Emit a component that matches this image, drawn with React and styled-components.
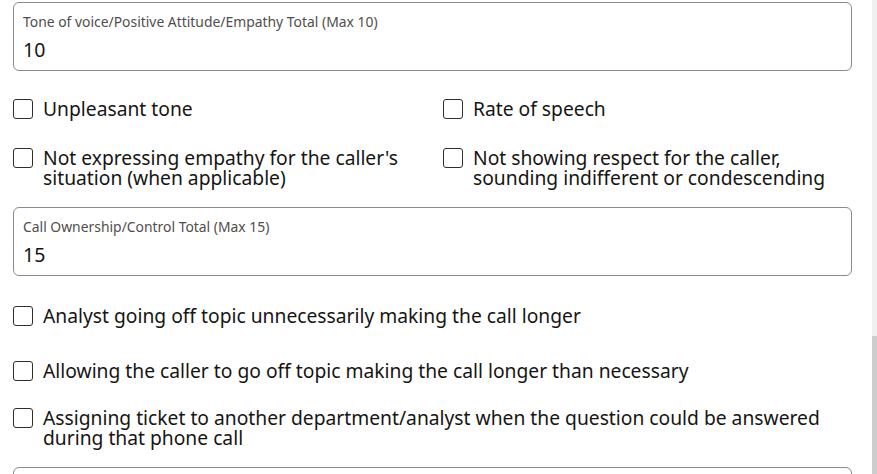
import React from "react";
import styled, { createGlobalStyle } from "styled-components";

const Global = createGlobalStyle`
  html, body {
    margin: 0;
    padding: 0;
    background: #ffffff;
    height: 474px;
    overflow: hidden;
  }
  body {
    font-family: "Noto Sans", "Open Sans", Arial, sans-serif;
    color: #161513;
  }
`;

const Page = styled.div`
  display: flex;
  width: 877px;
  height: 474px;
  overflow: hidden;
`;

const Content = styled.div`
  flex: 1;
  display: flex;
  flex-direction: column;
  padding: 2px 20px 0 13px;
`;

const Scrollbar = styled.div`
  width: 5px;
  height: 474px;
  background: #f0f0f0;
  display: flex;
  flex-direction: column;
`;

const Thumb = styled.div`
  margin-top: ${(p) => p.$offset}px;
  flex: 1;
  background: #cdcdcd;
`;

const Field = styled.div`
  flex: none;
  box-sizing: border-box;
  height: 69px;
  margin-top: ${(p) => p.$top || 0}px;
  border: 1px solid #8c8b8a;
  border-radius: 6px;
  padding: 10px 10px 8px 9px;
  display: flex;
  flex-direction: column;
`;

const FieldLabel = styled.div`
  font-size: 13.9px;
  line-height: 18px;
  color: #4f4e4c;
  white-space: nowrap;
`;

const FieldValue = styled.div`
  margin-top: 7px;
  font-size: 19.5px;
  line-height: 24px;
  color: #161513;
`;

const CheckGrid = styled.div`
  flex: none;
  display: grid;
  grid-template-columns: 430px 1fr;
  row-gap: 29px;
  margin-top: ${(p) => p.$top || 0}px;
`;

const CheckRow = styled.label`
  flex: none;
  display: flex;
  align-items: flex-start;
  gap: 10px;
  margin-top: ${(p) => p.$top || 0}px;
  cursor: pointer;
`;

const Box = styled.span`
  flex: none;
  box-sizing: border-box;
  width: 20px;
  height: 20px;
  border: 1px solid #2f2e2c;
  border-radius: 3px;
  background: #ffffff;
`;

const CheckText = styled.span`
  font-size: 19.25px;
  line-height: 20px;
  color: #161513;
`;

function Check({ top, children }) {
  return (
    <CheckRow $top={top}>
      <Box role="checkbox" aria-checked="false" />
      <CheckText>{children}</CheckText>
    </CheckRow>
  );
}

export default function App() {
  return (
    <>
      <Global />
      <Page>
        <Content>
          <Field>
            <FieldLabel>Tone of voice/Positive Attitude/Empathy Total (Max 10)</FieldLabel>
            <FieldValue>10</FieldValue>
          </Field>
          <CheckGrid $top={28}>
            <Check>Unpleasant tone</Check>
            <Check>Rate of speech</Check>
            <Check>
              Not expressing empathy for the caller's
              <br />
              situation (when applicable)
            </Check>
            <Check>
              Not showing respect for the caller,
              <br />
              sounding indifferent or condescending
            </Check>
          </CheckGrid>
          <Field $top={19}>
            <FieldLabel>Call Ownership/Control Total (Max 15)</FieldLabel>
            <FieldValue>15</FieldValue>
          </Field>
          <Check top={30}>Analyst going off topic unnecessarily making the call longer</Check>
          <Check top={35}>Allowing the caller to go off topic making the call longer than necessary</Check>
          <Check top={27}>
            Assigning ticket to another department/analyst when the question could be answered
            <br />
            during that phone call
          </Check>
          <Field $top={19} />
        </Content>
        <Scrollbar>
          <Thumb $offset={336} />
        </Scrollbar>
      </Page>
    </>
  );
}
